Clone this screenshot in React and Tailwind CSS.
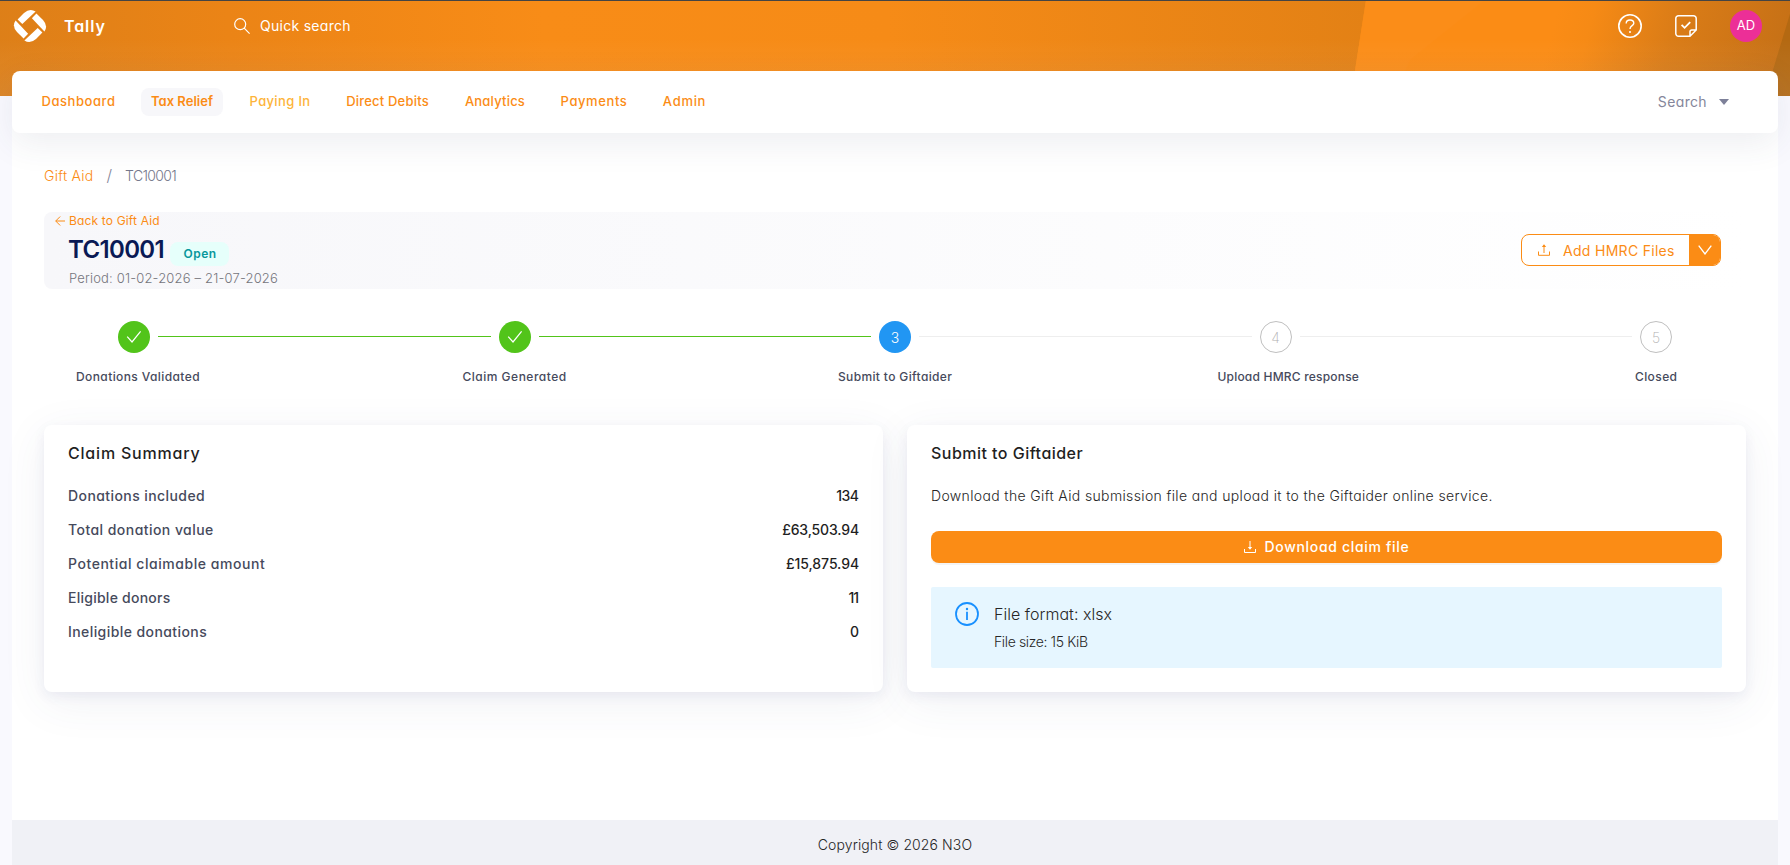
import React from "react";

const navItems = [
  { label: "Dashboard", cls: "w-[93px] tracking-[0.55px] text-[#fb8c15] font-medium" },
  { label: "Tax Relief", cls: "w-[82px] tracking-[0.02px] text-[#fb8c15] font-semibold bg-[#f7f7fa]", gap: "ml-[16px]" },
  { label: "Paying In", cls: "w-[80px] tracking-[0.35px] text-[#fdb43a] font-medium", gap: "ml-[17px]" },
  { label: "Direct Debits", cls: "w-[103px] tracking-[0.2px] text-[#fb8c15] font-medium", gap: "ml-[16px]" },
  { label: "Analytics", cls: "w-[80px] tracking-[0.2px] text-[#fb8c15] font-medium", gap: "ml-[16px]" },
  { label: "Payments", cls: "w-[86px] tracking-[0.6px] text-[#fb8c15] font-medium", gap: "ml-[16px]" },
  { label: "Admin", cls: "w-[63px] tracking-[0.7px] text-[#fb8c15] font-medium", gap: "ml-[16px]" },
];

const steps = [
  { label: "Donations Validated", state: "done", cls: "-ml-[42px] tracking-[0.4px]" },
  { label: "Claim Generated", state: "done", cls: "-ml-[36px] tracking-[0.5px]" },
  { label: "Submit to Giftaider", state: "active", cls: "-ml-[41px] tracking-[0.36px]" },
  { label: "Upload HMRC response", state: "todo", cls: "-ml-[42px] tracking-[0.2px]" },
  { label: "Closed", state: "todo", cls: "-ml-[5px] tracking-[0.4px]" },
];

const summary = [
  { label: "Donations included", value: "134", cls: "tracking-[0.42px]", vcls: "tracking-[-0.5px] mr-[0.5px]" },
  { label: "Total donation value", value: "£63,503.94", cls: "tracking-[0.45px]", vcls: "tracking-[-0.15px]" },
  { label: "Potential claimable amount", value: "£15,875.94", cls: "tracking-[0.55px]", vcls: "tracking-[-0.08px]" },
  { label: "Eligible donors", value: "11", cls: "tracking-[0.25px]", vcls: "tracking-[-1px] mr-px" },
  { label: "Ineligible donations", value: "0", cls: "tracking-[0.42px]", vcls: "" },
];

function HeaderArt() {
  return (
    <svg className="absolute inset-x-0 top-0 h-24 w-full" viewBox="0 0 1790 96" preserveAspectRatio="none">
      <defs>
        <linearGradient id="base" gradientUnits="userSpaceOnUse" x1="0" y1="96" x2="1366" y2="0">
          <stop offset="0" stopColor="#dd7f18" />
          <stop offset="0.17" stopColor="#eb8416" />
          <stop offset="0.4" stopColor="#f88c17" />
          <stop offset="0.65" stopColor="#f68b17" />
          <stop offset="1" stopColor="#e38115" />
        </linearGradient>
        <linearGradient id="right" gradientUnits="userSpaceOnUse" x1="1560" y1="0" x2="1790" y2="60">
          <stop offset="0" stopColor="#fb8c15" />
          <stop offset="0.15" stopColor="#f68a15" />
          <stop offset="0.5" stopColor="#da7c17" />
          <stop offset="1" stopColor="#c57016" />
        </linearGradient>
        <linearGradient id="veil" x1="0" y1="0" x2="0" y2="1">
          <stop offset="0.4" stopColor="#fff" stopOpacity="0" />
          <stop offset="1" stopColor="#d8d8d8" stopOpacity="0.09" />
        </linearGradient>
      </defs>
      <rect width="1790" height="96" fill="url(#base)" />
      <path d="M1366 0H1790V96H1351Z" fill="url(#right)" />
      <path d="M1366 0H1485L1410 60L1395 96H1351Z" fill="#fb8d18" />
      <path d="M1790 14V96H1765Z" fill="#b46912" />
      <rect width="1790" height="96" fill="url(#veil)" />
      <rect width="1790" height="1" fill="#444" />
    </svg>
  );
}

function Logo() {
  const blade = "M4.6 10.600 11 4Q17-1.400 22.600 2.600L9.300 15.100Z";
  return (
    <svg width="34" height="34" viewBox="0 0 34 34" fill="#fff">
      <path d={blade} />
      <path d={blade} transform="rotate(90 17 17)" />
      <path d={blade} transform="rotate(180 17 17)" />
      <path d={blade} transform="rotate(270 17 17)" />
    </svg>
  );
}

function Check() {
  return (
    <svg width="16" height="16" viewBox="0 0 16 16" fill="none" stroke="#fff" strokeWidth="1.2">
      <path d="M1.2 7.6 6 13 14.6 2.4" />
    </svg>
  );
}

function StepDot({ state, n }) {
  if (state === "done")
    return (
      <span className="flex size-8 shrink-0 items-center justify-center rounded-full bg-[#52c41a]">
        <Check />
      </span>
    );
  if (state === "active")
    return (
      <span className="flex size-8 shrink-0 items-center justify-center rounded-full bg-[#2196f3] text-[14px] font-light text-white">
        {n}
      </span>
    );
  return (
    <span className="flex size-8 shrink-0 items-center justify-center rounded-full border border-[#bfbfbf] text-[14px] font-extralight text-[#b0b0b0]">
      {n}
    </span>
  );
}

export default function App() {
  return (
    <div className="relative flex h-[865px] w-[1790px] flex-col overflow-hidden bg-[#f9f9fe] font-['Inter',sans-serif] whitespace-nowrap [font-feature-settings:'cv11']">
      <HeaderArt />

      <header className="relative flex h-[71px] shrink-0 items-start pt-[9px] pr-7 pl-[13px] text-white">
        <Logo />
        <span className="mt-[5px] ml-[17px] w-[170px] text-[16px] leading-6 font-semibold tracking-[0.9px]">Tally</span>
        <svg className="mt-[9px]" width="16" height="16" viewBox="0 0 16 16" fill="none" stroke="#fff" strokeWidth="1.2">
          <circle cx="6.2" cy="6.2" r="5.5" />
          <path d="m10.2 10.2 5.4 5.4" />
        </svg>
        <span className="mt-[5px] ml-[10px] text-[14px] leading-6 tracking-[0.28px]">Quick search</span>
        <svg className="mt-[5px] ml-auto" width="24" height="24" viewBox="0 0 24 24" fill="none" stroke="#fff" strokeWidth="1.6">
          <circle cx="12" cy="12" r="11.2" />
          <path d="M8.2 9.4c0-2.1 1.7-3.4 3.8-3.4s3.8 1.4 3.8 3.3c0 2.4-3.8 2.4-3.8 5.6" strokeWidth="1.4" />
          <circle cx="12" cy="18" r="1" fill="#fff" stroke="none" />
        </svg>
        <svg className="mt-[6px] ml-[33px]" width="22" height="22" viewBox="0 0 22 22" fill="none" stroke="#fff" strokeWidth="1.5">
          <path d="M15 21.2H3.5A2.7 2.7 0 0 1 .8 18.5V3.5A2.7 2.7 0 0 1 3.5.8h15a2.7 2.7 0 0 1 2.7 2.7V15L15 21.2v-4.4A1.8 1.8 0 0 1 16.800 15h4.400" />
          <path d="m6.600 9.800 3 3L15.200 7.200" strokeWidth="1.8" />
        </svg>
        <span className="mt-[1px] ml-[33px] flex size-8 items-center justify-center rounded-full bg-[#ec2f97] text-[13px]">AD</span>
      </header>

      <nav className="relative z-10 mx-3 flex h-[62px] shrink-0 items-center rounded-lg bg-white pr-[49px] pl-5 shadow-[0_10px_35px_rgba(60,70,100,0.09)]">
        {navItems.map((n) => (
          <a key={n.label} className={`flex h-7 items-center justify-center rounded-lg text-[13px] ${n.gap || ""} ${n.cls}`}>
            {n.label}
          </a>
        ))}
        <span className="ml-auto text-[14px] leading-5 tracking-[0.35px] text-[#85869a]">Search</span>
        <svg className="ml-3" width="10" height="6" viewBox="0 0 10 6" fill="#7d8099">
          <path d="M0 0h10L5 6Z" />
        </svg>
      </nav>

      <main className="relative mx-3 -mt-2 flex flex-1 flex-col bg-white px-8 pt-2">
        <div className="mt-[32px] flex h-5 items-center text-[14px] font-light">
          <span className="tracking-[0.25px] text-[#fb8c15]">Gift Aid</span>
          <span className="ml-[13px] text-[16px] text-[#85869a]">/</span>
          <span className="ml-[13px] tracking-[-0.65px] text-[#75788c]">TC10001</span>
        </div>

        <section className="mt-[27px] flex h-[77px] items-center justify-between rounded-lg bg-linear-to-r from-[#f7f7fa] to-white pr-[25px]">
          <div className="flex h-full flex-col">
            <a className="ml-[11px] flex h-[18px] items-center text-[12px] tracking-[0.16px] text-[#fb8c15]">
              <svg className="mr-1" width="10" height="10" viewBox="0 0 10 10" fill="none" stroke="currentColor">
                <path d="M10 5H.8M5.200.500.700 5l4.500 4.500" />
              </svg>
              Back to Gift Aid
            </a>
            <div className="ml-[24px] flex h-[39px] items-center">
              <h1 className="w-[102px] text-[24px] font-semibold tracking-[-0.65px] text-[#0a1a55]">TC10001</h1>
              <span className="mt-[9px] flex h-6 w-[59px] items-center justify-center rounded-lg bg-[#e6fffb] pl-px text-[12px] font-semibold tracking-[0.45px] text-[#08979c]">
                Open
              </span>
            </div>
            <span className="-mt-px ml-[25px] text-[13px] leading-5 font-light tracking-[0.17px] text-[#75757c]">
              Period: 01-02-2026 – 21-07-2026
            </span>
          </div>
          <div className="-mt-px flex h-8 w-[200px] overflow-hidden rounded-lg border border-[#fb8c15] bg-white">
            <div className="flex flex-1 items-center pl-4 text-[#fb8c15]">
              <svg width="12" height="12" viewBox="0 0 12 12" fill="none" stroke="currentColor">
                <path d="M.5 7.500v3.800h11V7.500M6 9V1.500" />
                <path d="M3.800 3 6 .300 8.200 3Z" fill="currentColor" stroke="none" />
              </svg>
              <span className="ml-[13px] text-[14px] tracking-[0.3px]">Add HMRC Files</span>
            </div>
            <div className="flex w-[31px] items-center justify-center bg-[#fb8c15]">
              <svg width="14" height="10" viewBox="0 0 14 10" fill="none" stroke="#fff" strokeWidth="1.300">
                <path d="M.700.600 7 9 13.300.600" />
              </svg>
            </div>
          </div>
        </section>

        <div className="mt-8 flex pl-[74px]">
          {steps.map((s, i) => (
            <div key={s.label} className="w-[380.5px] shrink-0 last:w-8">
              <div className="flex items-center gap-2">
                <StepDot state={s.state} n={i + 1} />
                {i < 4 && <span className={`-mt-px mr-2 h-px flex-1 ${s.state === "done" ? "bg-[#52c41a]" : "bg-[#eeeeee]"}`} />}
              </div>
              <div className={`mt-[14px] text-[12px] leading-5 font-medium text-[#464a5c] ${s.cls}`}>{s.label}</div>
            </div>
          ))}
        </div>

        <div className="mt-[38px] flex gap-6">
          <section className="h-[267px] flex-1 rounded-lg bg-white p-6 pt-[16px] shadow-[0_10px_45px_rgba(70,80,120,0.08),0_4px_12px_rgba(80,80,150,0.08)]">
            <h2 className="text-[16px] leading-6 font-medium tracking-[0.8px] text-[#1f1f1f]">Claim Summary</h2>
            <div className="mt-[13px]">
              {summary.map((r) => (
                <div key={r.label} className="flex h-[34px] items-center justify-between text-[14px] font-medium">
                  <span className={`text-[#464a5c] ${r.cls}`}>{r.label}</span>
                  <span className={`text-[#1f1f1f] ${r.vcls}`}>{r.value}</span>
                </div>
              ))}
            </div>
          </section>

          <section className="h-[267px] flex-1 rounded-lg bg-white p-6 pt-[16px] shadow-[0_10px_45px_rgba(70,80,120,0.08),0_4px_12px_rgba(80,80,150,0.08)]">
            <h2 className="text-[16px] leading-6 font-medium tracking-[0.47px] text-[#1f1f1f]">Submit to Giftaider</h2>
            <p className="mt-[20px] text-[14px] leading-[22px] font-light tracking-[0.36px] text-[#262626]">
              Download the Gift Aid submission file and upload it to the Giftaider online service.
            </p>
            <button className="mt-6 flex h-8 w-full items-center justify-center rounded-lg bg-[#fb8c15] text-white shadow-[0_2px_0_rgba(0,0,0,0.045)]">
              <svg width="12" height="12" viewBox="0 0 12 12" fill="none" stroke="currentColor">
                <path d="M.5 8v3.500h11V8M6 0v7" />
                <path d="M3.800 6 6 8.700 8.200 6Z" fill="currentColor" stroke="none" />
              </svg>
              <span className="-mt-px ml-[9px] text-[14px] font-medium tracking-[0.68px]">Download claim file</span>
            </button>
            <div className="mt-6 flex h-[81px] rounded-xs bg-[#e6f6ff] pt-[15px] pl-6">
              <svg width="24" height="24" viewBox="0 0 24 24" fill="none" stroke="#1890ff" strokeWidth="1.800">
                <circle cx="12" cy="12" r="11" />
                <path d="M12 9.800V18" />
                <circle cx="12" cy="7" r="1.200" fill="#1890ff" stroke="none" />
              </svg>
              <div className="ml-[15px] font-light text-[#262626]">
                <div className="text-[16px] leading-6 tracking-[0.03px]">File format: xlsx</div>
                <div className="mt-[5px] text-[14px] leading-[22px] tracking-[-0.38px]">File size: 15 KiB</div>
              </div>
            </div>
          </section>
        </div>
      </main>

      <footer className="mx-3 flex h-[45px] shrink-0 items-center justify-center bg-[#f0f1f6] pt-[3px] text-[14px] font-light tracking-[0.1px] text-[#262626]">
        Copyright © 2026 N3O
      </footer>
    </div>
  );
}
